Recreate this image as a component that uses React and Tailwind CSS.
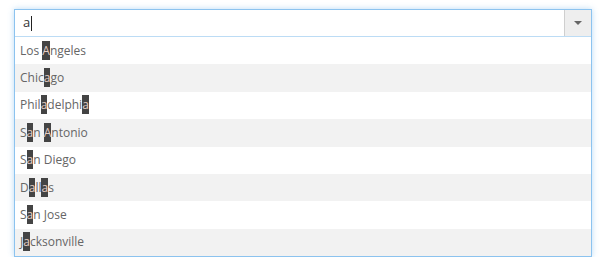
const cities = [
  "Los Angeles",
  "Chicago",
  "Philadelphia",
  "San Antonio",
  "San Diego",
  "Dallas",
  "San Jose",
  "Jacksonville",
];

const highlight = (text, term) => {
  const parts = text.split(new RegExp(`(${term})`, "gi"));
  return parts.map((part, i) =>
    part.toLowerCase() === term.toLowerCase() ? (
      <span key={i} className="bg-[#444] text-[#e6cfc6] py-px">
        {part}
      </span>
    ) : (
      part
    )
  );
};

const App = () => {
  const term = "a";

  return (
    <div className="w-[600px] h-[257px] bg-white pt-[9px] pl-[14px]" style={{ fontFamily: "'Open Sans', sans-serif" }}>
      <div className="w-[578px] border border-[#8cc3ef] shadow-[0_0_6px_rgba(102,175,233,0.45)] bg-white">
        {/* Input */}
        <div className="flex h-[27px] border-b border-[#bcdcf5]">
          <div className="flex-1 flex items-center pl-[8px] text-[13px] text-[#333]">
            <span>{term}</span>
            <span className="w-px h-[15px] bg-[#222] ml-px" />
          </div>
          <div className="w-[27px] flex items-center justify-center bg-[#eeeeee] border-l border-[#cfcfcf]">
            <svg width="8" height="4" viewBox="0 0 8 4">
              <path d="M0 0 L8 0 L4 4 Z" fill="#666" />
            </svg>
          </div>
        </div>

        {/* Results */}
        <ul>
          {cities.map((city, i) => (
            <li
              key={city}
              className={`h-[27.4px] flex items-center pl-[5px] text-[12px] text-[#666] ${
                i % 2 === 1 ? "bg-[#f2f2f2]" : "bg-white"
              }`}
            >
              <span>{highlight(city, term)}</span>
            </li>
          ))}
        </ul>
      </div>
    </div>
  );
};

export default App;
